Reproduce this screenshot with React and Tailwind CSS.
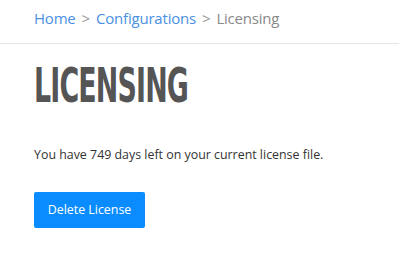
import React from 'react';

function App() {
  return (
    <div className="min-h-screen bg-white" style={{ fontFamily: '"Open Sans", sans-serif' }}>
      {/* breadcrumb */}
      <nav className="h-[44px] border-b border-[#e6e6e6] px-[34px] pt-[7px] flex items-start text-[15px] leading-[22px] tracking-[-0.2px]">
        <a className="text-[#4a90e2]">Home</a>
        <span className="mx-[6px] text-[#999]">&gt;</span>
        <a className="text-[#4a90e2]">Configurations</a>
        <span className="mx-[6px] text-[#999]">&gt;</span>
        <span className="text-[#8a8a8a]">Licensing</span>
      </nav>

      <main className="px-[34px]">
        <h1
          className="mt-[14px] text-[48px] leading-[54px] font-bold text-[#555] uppercase tracking-[-1.5px] origin-left scale-x-[0.56] whitespace-nowrap"
          style={{ fontFamily: '"DejaVu Sans", sans-serif' }}
        >
          Licensing
        </h1>
        <p className="mt-[34px] text-[12.4px] leading-[18px] text-[#333]">
          You have 749 days left on your current license file.
        </p>
        <button className="mt-[28px] h-[36px] w-[111px] rounded-[2px] bg-[#0a8cff] text-white text-[12.4px]">
          Delete License
        </button>
      </main>
    </div>
  );
}

export default App;
